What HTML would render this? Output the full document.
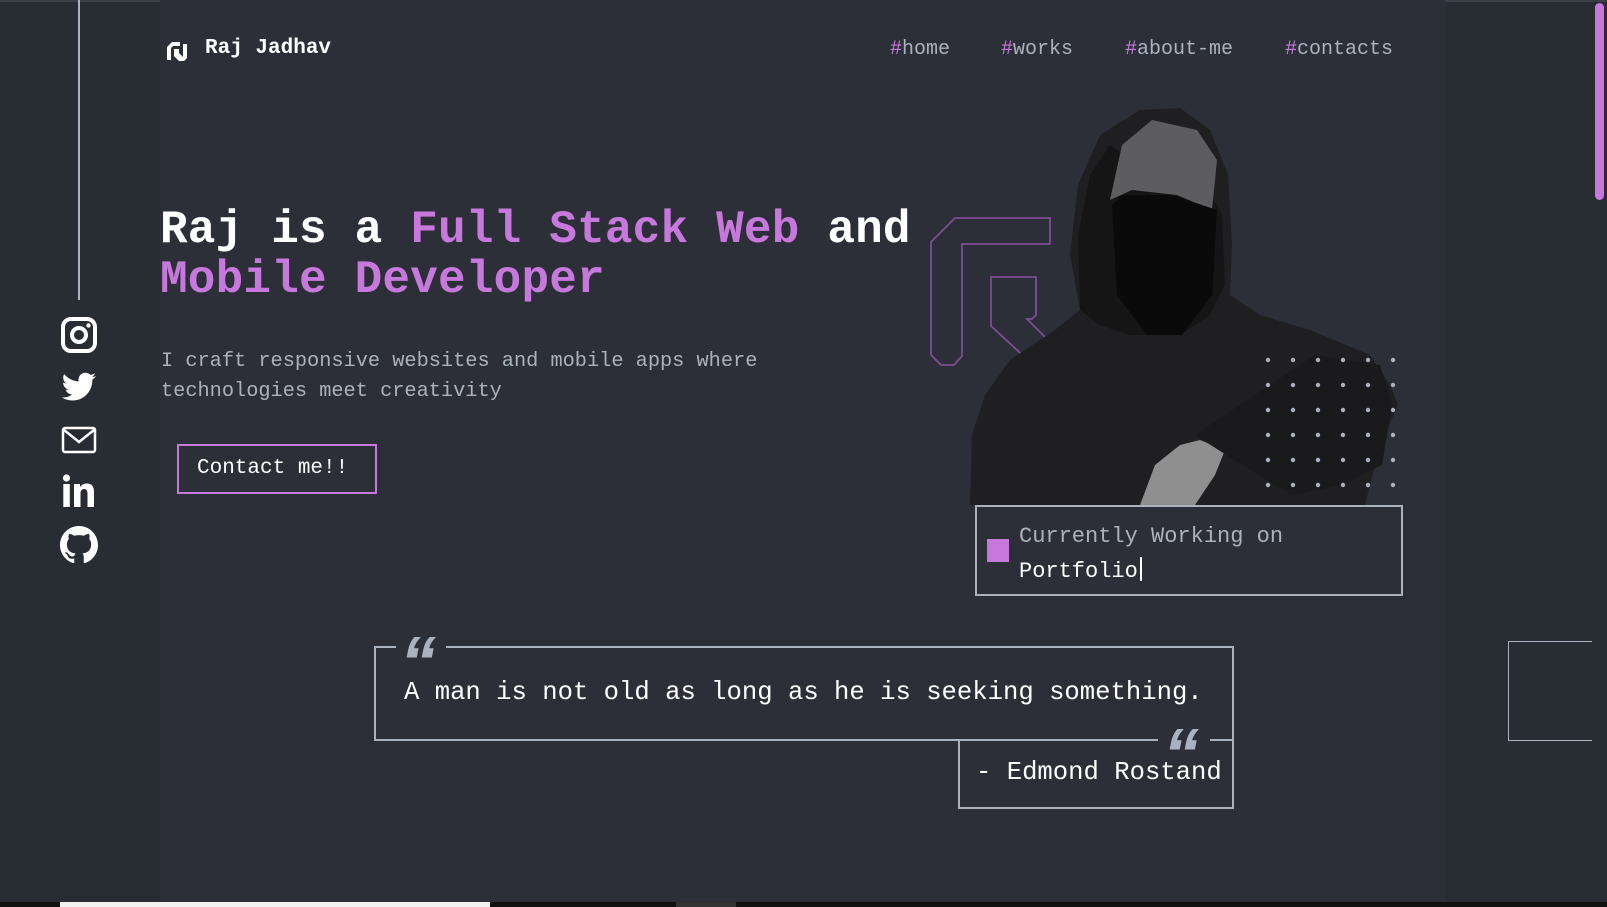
<!DOCTYPE html>
<html><head><meta charset="utf-8">
<style>
*{margin:0;padding:0;box-sizing:border-box}
html,body{width:1607px;height:907px;overflow:hidden;background:#282c33;font-family:"Liberation Mono","DejaVu Sans Mono",monospace;color:#fff}
.abs{position:absolute}
.col{left:160px;top:0;width:1285px;height:902px;background:#2c2f37}
.nav a{position:absolute;top:38px;font-size:20px;color:#abb2bf;text-decoration:none;white-space:nowrap}
.nav a b{color:#c778dd;font-weight:normal}
.p{color:#c778dd}
h1{position:absolute;left:160px;top:205px;font-size:46px;line-height:50px;font-weight:bold;white-space:nowrap;letter-spacing:0.2px}
.sub{left:161px;top:347px;font-size:20.3px;line-height:30px;color:#abb2bf;white-space:nowrap}
.btn{left:177px;top:444px;width:200px;height:50px;border:2px solid #c778dd;font-size:21px;line-height:46px;padding-left:18px;color:#fff}
.ic{left:60px;width:38px;height:38px}
.q{font-family:"Liberation Sans",sans-serif;font-size:72px;font-weight:bold;font-style:italic;color:#abb2bf;line-height:72px;letter-spacing:-4px}
</style></head><body>
<div class="abs" style="left:0;top:0;width:1607px;height:2px;background:#3a3e46"></div>
<div class="abs col"></div>
<div class="abs" style="left:78px;top:0;width:2px;height:300px;background:#abb2bf"></div>

<svg class="abs" style="left:165px;top:40px" width="26" height="22" viewBox="0 0 26 22">
<path d="M2 20V7l5-5h8v4H8L6 8v12z M9 9h5v4l4 4v-13h4v14l-3 3h-5l-5-5z" fill="#fff"/>
</svg>
<div class="abs" style="left:205px;top:37px;font-size:21px;font-weight:bold;white-space:nowrap">Raj Jadhav</div>

<div class="nav">
<a style="left:890px"><b>#</b>home</a>
<a style="left:1001px"><b>#</b>works</a>
<a style="left:1125px"><b>#</b>about-me</a>
<a style="left:1285px"><b>#</b>contacts</a>
</div>

<h1>Raj is a <span class="p">Full Stack Web</span> and<br><span class="p">Mobile Developer</span></h1>
<div class="abs sub">I craft responsive websites and mobile apps where<br>technologies meet creativity</div>
<div class="abs btn">Contact me!!</div>

<svg class="abs ic" style="top:316px" viewBox="0 0 38 38"><rect x="3" y="3" width="32" height="32" rx="8" fill="none" stroke="#fff" stroke-width="4"/><circle cx="19" cy="19" r="7" fill="none" stroke="#fff" stroke-width="4"/><circle cx="28.5" cy="9.5" r="2.2" fill="#fff"/></svg>
<svg class="abs ic" style="top:368px" viewBox="0 0 38 38"><path d="M36 8c-1.3.6-2.6.9-4 1.1 1.4-.9 2.5-2.2 3-3.8-1.4.8-2.9 1.4-4.4 1.7C29.3 5.6 27.5 4.8 25.5 4.8c-3.9 0-7 3.1-7 7 0 .5.1 1.1.2 1.600C12.800 13.100 7.700 10.300 4.200 6.100c-.6 1-1 2.2-1 3.5 0 2.4 1.2 4.6 3.1 5.8-1.1 0-2.2-.3-3.2-.9v.1c0 3.4 2.4 6.2 5.6 6.9-.6.2-1.2.2-1.8.2-.5 0-.9 0-1.3-.1.9 2.8 3.5 4.8 6.5 4.9-2.4 1.9-5.4 3-8.7 3-.6 0-1.1 0-1.7-.1 3.1 2 6.8 3.1 10.7 3.1 12.9 0 19.9-10.7 19.9-19.9v-.9C33.9 10.6 35.1 9.4 36 8z" fill="#fff"/></svg>
<svg class="abs ic" style="top:421px" viewBox="0 0 38 38"><rect x="3" y="7" width="32" height="24" rx="2" fill="none" stroke="#fff" stroke-width="2.5"/><path d="M4 9l15 12 15-12" fill="none" stroke="#fff" stroke-width="2.5"/></svg>
<svg class="abs ic" style="top:473px" viewBox="0 0 38 38"><circle cx="6.5" cy="5" r="3.6" fill="#fff"/><rect x="3.3" y="11" width="6.5" height="23" fill="#fff"/><path d="M14 11h6v3.2c1.2-2.1 3.6-3.7 6.8-3.7 5.2 0 7.2 3.2 7.2 8.5V34h-6.5V20.5c0-2.8-1-4.5-3.4-4.5-2.5 0-3.6 1.8-3.6 4.5V34H14z" fill="#fff"/></svg>
<svg class="abs ic" style="top:526px" viewBox="0 0 16 16"><path fill="#fff" d="M8 0C3.58 0 0 3.58 0 8c0 3.54 2.29 6.53 5.470 7.590.4.07.55-.17.55-.38 0-.19-.01-.82-.01-1.49-2.01.37-2.53-.49-2.69-.94-.09-.23-.48-.94-.82-1.13-.28-.15-.68-.52-.01-.53.63-.01 1.08.58 1.23.82.72 1.21 1.87.87 2.33.66.07-.52.28-.87.51-1.07-1.78-.2-3.64-.89-3.64-3.95 0-.87.31-1.59.82-2.15-.08-.2-.36-1.02.08-2.12 0 0 .67-.21 2.2.82.64-.18 1.32-.27 2-.27.68 0 1.36.09 2 .27 1.53-1.04 2.2-.82 2.2-.82.44 1.1.16 1.92.08 2.12.51.56.82 1.270.82 2.150 0 3.070-1.870 3.750-3.650 3.950.29.25.54.73.54 1.48 0 1.07-.01 1.93-.01 2.2 0 .21.15.46.55.38A8.013 8.013 0 0016 8c0-4.42-3.58-8-8-8z"/></svg>

<svg class="abs" style="left:925px;top:212px" width="180" height="160" viewBox="0 0 180 160">
<path d="M30 6h95v26H37v112l-8 9h-13l-10-10V30z" fill="none" stroke="#7e4d94" stroke-width="1.8"/>
<path d="M66 65h45v38l-4 4-5 0 24 24-20 20L66 114z" fill="none" stroke="#7e4d94" stroke-width="1.8"/>
<path d="M158 6h20v80h-20z" fill="none" stroke="#7e4d94" stroke-width="1.8"/>
</svg>

<!-- figure -->
<svg class="abs" style="left:960px;top:105px" width="470" height="400" viewBox="0 0 470 400">
<path d="M10 400L12 330 25 290 50 255 95 225 120 205 110 150 118 80 140 30 180 5 220 3 250 25 268 70 272 140 270 190 300 210 350 225 410 250 430 280 438 300 420 340 410 380 405 400z" fill="#1f1f21"/>
<path d="M120 205L118 130 130 70 150 40 180 60 240 70 262 110 265 180 250 210 220 230 170 230 140 220z" fill="#151516"/>
<path d="M150 95l12-55 30-25 45 10 20 30 -5 50-35-15-45-5z" fill="#5d5d5f"/>
<path d="M152 100l10-10 50 0 45 15 -5 85-30 40-35 0-30-40z" fill="#0a0a0a"/>
<path d="M180 400l15-40 25-20 20-5 25 10-10 25-20 30z" fill="#8f8f8f"/>
<path d="M235 330l60-40 60-40 65 10 12 40-10 60-40 20-50 10-50-30z" fill="#1a1a1c"/>
</svg>

<svg class="abs" style="left:1262px;top:354px" width="140" height="140">
<g fill="#abb2bf">
<circle cx="6" cy="6" r="2.2"/><circle cx="31" cy="6" r="2.2"/><circle cx="56" cy="6" r="2.2"/><circle cx="81" cy="6" r="2.2"/><circle cx="106" cy="6" r="2.2"/><circle cx="131" cy="6" r="2.2"/>
<circle cx="6" cy="31" r="2.2"/><circle cx="31" cy="31" r="2.2"/><circle cx="56" cy="31" r="2.2"/><circle cx="81" cy="31" r="2.2"/><circle cx="106" cy="31" r="2.2"/><circle cx="131" cy="31" r="2.2"/>
<circle cx="6" cy="56" r="2.2"/><circle cx="31" cy="56" r="2.2"/><circle cx="56" cy="56" r="2.2"/><circle cx="81" cy="56" r="2.2"/><circle cx="106" cy="56" r="2.2"/><circle cx="131" cy="56" r="2.2"/>
<circle cx="6" cy="81" r="2.2"/><circle cx="31" cy="81" r="2.2"/><circle cx="56" cy="81" r="2.2"/><circle cx="81" cy="81" r="2.2"/><circle cx="106" cy="81" r="2.2"/><circle cx="131" cy="81" r="2.2"/>
<circle cx="6" cy="106" r="2.2"/><circle cx="31" cy="106" r="2.2"/><circle cx="56" cy="106" r="2.2"/><circle cx="81" cy="106" r="2.2"/><circle cx="106" cy="106" r="2.2"/><circle cx="131" cy="106" r="2.2"/>
<circle cx="6" cy="131" r="2.2"/><circle cx="31" cy="131" r="2.2"/><circle cx="56" cy="131" r="2.2"/><circle cx="81" cy="131" r="2.2"/><circle cx="106" cy="131" r="2.2"/><circle cx="131" cy="131" r="2.2"/>
</g></svg>

<div class="abs" style="left:975px;top:505px;width:428px;height:91px;border:2px solid #abb2bf;background:#2c2f37"></div>
<div class="abs" style="left:987px;top:539px;width:22px;height:23px;background:#c778dd"></div>
<div class="abs" style="left:1019px;top:519px;font-size:22px;line-height:35px;color:#abb2bf;white-space:nowrap">Currently Working on<br><span style="color:#fff">Portfolio</span><span style="display:inline-block;width:2px;height:24px;background:#fff;vertical-align:-4px;margin-left:2px"></span></div>

<div class="abs" style="left:374px;top:646px;width:860px;height:95px;border:2px solid #abb2bf"></div>
<div class="abs" style="left:396px;top:630px;width:50px;height:36px;background:#2c2f37"></div>
<div class="abs q" style="left:400px;top:627px">&ldquo;</div>
<div class="abs" style="left:404px;top:678px;font-size:25.6px;white-space:nowrap;color:#fff">A man is not old as long as he is seeking something.</div>
<div class="abs" style="left:958px;top:739px;width:276px;height:70px;border:2px solid #abb2bf;border-top:none"></div>
<div class="abs" style="left:1158px;top:726px;width:52px;height:32px;background:#2c2f37"></div>
<div class="abs q" style="left:1163px;top:719px">&ldquo;</div>
<div class="abs" style="left:976px;top:758px;font-size:25.6px;white-space:nowrap;color:#fff">- Edmond Rostand</div>

<div class="abs" style="left:1508px;top:641px;width:84px;height:100px;border:1px solid #abb2bf;border-right:none"></div>
<div class="abs" style="left:1595px;top:3px;width:9px;height:197px;border-radius:5px;background:#c778dd"></div>
<div class="abs" style="left:0;top:902px;width:1607px;height:5px;background:#111"></div>
<div class="abs" style="left:60px;top:902px;width:430px;height:5px;background:#f2f2f2"></div>
<div class="abs" style="left:676px;top:902px;width:60px;height:5px;background:#333"></div>
</body></html>
